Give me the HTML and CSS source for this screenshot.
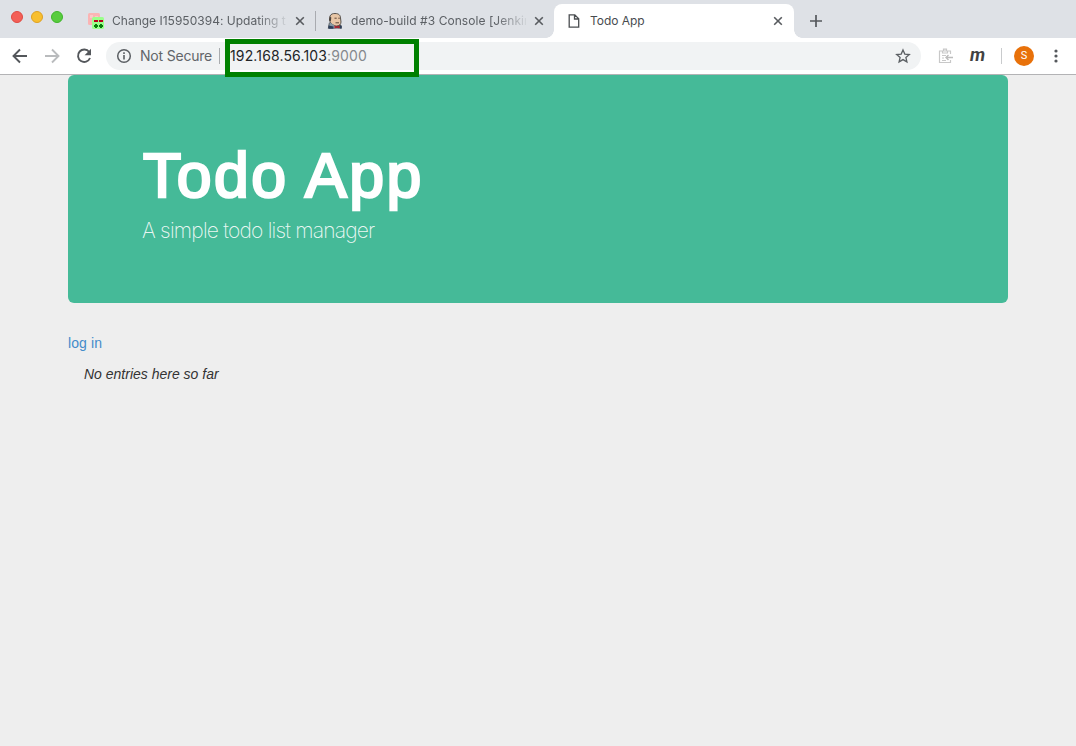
FILE: index.html
```
<!DOCTYPE html>
<html lang="en">
<head>
<meta charset="utf-8">
<title>Todo App</title>
<link rel="stylesheet" href="styles.css">
</head>
<body>
<div class="browser">
  <div class="tabstrip">
    <div class="lights"><i class="light red"></i><i class="light yellow"></i><i class="light green"></i></div>
    <div class="tab first">
      <svg class="favicon" width="16" height="16" viewBox="0 0 16 16"><rect width="12" height="12" rx="1.5" fill="#fbb4b4"/><path d="M2 2h3v3H2zM7 3h3v2H7z" fill="#fcc9c9"/><rect x="4" y="4" width="12" height="12" rx="1.5" fill="#9bff8c"/><path d="M6 8h4M11 8h4" stroke="#b8001c" stroke-width="2"/><path d="M6 13h4M8 11v4M11 13h4M13 11v4" stroke="#087e0b" stroke-width="2"/></svg>
      <span class="label change">Change I15950394: Updating t</span>
      <svg class="close" width="10" height="10" viewBox="0 0 10 10"><path d="M1.2 1.2l7.6 7.6M8.8 1.2L1.2 8.8"/></svg>
    </div>
    <div class="divider"></div>
    <div class="tab second">
      <svg class="favicon" width="16" height="16" viewBox="0 0 16 16"><path d="M2 9.500L.8 15.500h14V13l-3-3z" fill="#4b5055"/><path d="M3 3C4 .9 6 .5 8 .5c4 0 5.500 2 5.500 4.500L14 9c0 2.500-2 4-4.500 4S3 10.500 2.500 7z" fill="#e8c6a6" stroke="#4a4541" stroke-width=".9"/><path d="M2.800 3.500l1.500 1-.5 4-1.800-1.500z" fill="#4b423c"/><path d="M7.500 5.200h2.200M11.300 5.200h1.500M8.500 9.800h3.500" stroke="#5d4637" stroke-width="1"/><path d="M2.500 10l1.500 0 4 3 .5 2.500H2z" fill="#899ba5"/><path d="M7.500 12.500l2.500 1 2.500-1v3l-2.500-1-2.500 1z" fill="#b52130"/><path d="M1.500 12.500l5 1v2.200h-5zM13 13l1.500-.5v3H13z" fill="#2d3f5c"/></svg>
      <span class="label demo">demo-build #3 Console [Jenkin</span>
      <svg class="close" width="10" height="10" viewBox="0 0 10 10"><path d="M1.200 1.200l7.600 7.600M8.800 1.200L1.200 8.800"/></svg>
    </div>
    <div class="tab active">
      <svg class="page-icon" width="12" height="14" viewBox="0 0 12 14"><path d="M1.200.8h5.600l3.900 3.900v8.500H1.200zM6.500.8v4.200h4.200" fill="none" stroke="#4b4e51" stroke-width="1.300"/></svg>
      <span class="label todo">Todo App</span>
      <svg class="close" width="10" height="10" viewBox="0 0 10 10"><path d="M1.200 1.200l7.600 7.600M8.800 1.200L1.200 8.800"/></svg>
    </div>
    <svg class="plus" width="12" height="12" viewBox="0 0 12 12"><path d="M0 6h12M6 0v12" stroke="#55585c" stroke-width="1.700"/></svg>
  </div>
  <div class="toolbar">
    <svg class="nav" width="24" height="24" viewBox="0 0 24 24"><path d="M19 12H6M12 5.500L5.500 12l6.500 6.500" fill="none" stroke="#54575b" stroke-width="1.900"/></svg>
    <svg class="nav" width="24" height="24" viewBox="0 0 24 24"><path d="M5 12h13M12 5.500l6.500 6.500-6.500 6.500" fill="none" stroke="#b9bbbd" stroke-width="1.900"/></svg>
    <svg class="nav" width="24" height="24" viewBox="0 0 24 24"><path d="M17.200 8A6.200 6.200 0 1 0 18 14" fill="none" stroke="#54575b" stroke-width="1.900"/><path d="M19 4.800v6.400h-6.400z" fill="#54575b"/></svg>
    <div class="omnibox">
      <svg width="16" height="16" viewBox="0 0 16 16"><circle cx="8" cy="8" r="6.300" fill="none" stroke="#5b5f63" stroke-width="1.500"/><path d="M8 7v4.500M8 4.300v1.600" stroke="#5b5f63" stroke-width="1.600"/></svg>
      <span class="security">Not Secure</span>
      <span class="bar"></span>
      <span class="url">192.168.56.103<span class="port">:9000</span></span>
      <svg class="star" width="16" height="16" viewBox="0 0 16 16"><path d="M8 1.900l1.800 4.200 4.500.4-3.400 3 1 4.400L8 11.600l-3.900 2.300 1-4.400-3.400-3 4.500-.4z" fill="none" stroke="#5b5f63" stroke-width="1.300"/></svg>
    </div>
    <svg class="clip" width="16" height="16" viewBox="0 0 16 16"><path d="M12.500 6V3h-11v11.500h11V12M4.500 3v2h5V3M5.500 3V1.200h3V3M4 7.500h4M4 10h2M4 12.500h4" fill="none" stroke="#c8c8c8" stroke-width="1.200"/><path d="M15 9.500H8M10.500 7L8 9.500l2.500 2.500" fill="none" stroke="#bcbcbc" stroke-width="1.400"/></svg>
    <span class="m">m</span>
    <span class="sep"></span>
    <span class="avatar">S</span>
    <svg class="dots" width="4" height="14" viewBox="0 0 4 14"><g fill="#55585c"><circle cx="2" cy="2" r="1.600"/><circle cx="2" cy="7" r="1.600"/><circle cx="2" cy="12" r="1.600"/></g></svg>
  </div>
  <div class="highlight"></div>
</div>
<main class="container">
  <header class="jumbotron">
    <h1>Todo App</h1>
    <p>A simple todo list manager</p>
  </header>
  <a class="login">log in</a>
  <p class="empty">No entries here so far</p>
</main>
</body>
</html>
```

FILE: styles.css
```
* { box-sizing: border-box; }
body { margin: 0; height: 746px; overflow: hidden; background: #eee; color: #333; font-family: "Liberation Sans", Arial, sans-serif; }
svg { display: block; flex: none; }
.browser { position: relative; height: 75px; background: #fff; border-bottom: 1px solid #b3b3b5; font-family: Inter, Roboto, sans-serif; }
.tabstrip { height: 38px; display: flex; background: #dee1e6; }
.lights { width: 74px; padding: 11px 0 0 11px; display: flex; gap: 8px; }
.light { width: 12px; height: 12px; border-radius: 50%; border: 1px solid; }
.red { background: #f35f57; border-color: #df4a43; }
.yellow { background: #f8bf2f; border-color: #dea123; }
.green { background: #58cc3e; border-color: #3fb52b; }
.tab { display: flex; align-items: center; height: 34px; margin-top: 4px; }
.first { width: 241px; padding-left: 14px; }
.second { width: 238px; padding-left: 11px; }
.favicon { margin-right: 8px; }
.label { font-family: Inter, sans-serif; font-size: 12px; line-height: 16px; color: #5c6065; white-space: nowrap; }
.change, .demo { width: 175px; -webkit-mask-image: linear-gradient(90deg, #000 145px, transparent 178px); mask-image: linear-gradient(90deg, #000 145px, transparent 178px); }
.change { letter-spacing: .01px; }
.demo { letter-spacing: .05px; }
.todo { color: #484b4f; letter-spacing: -.05px; }
.close { margin-left: 8px; fill: none; stroke: #585b5f; stroke-width: 1.6; }
.divider { width: 1px; height: 20px; margin-top: 11px; background: #a9abb0; }
.active { position: relative; width: 240px; background: #fff; border-radius: 8px 8px 0 0; padding: 0 11px 0 14px; }
.active::before, .active::after { content: ""; position: absolute; bottom: 0; width: 8px; height: 8px; }
.active::before { left: -8px; background: radial-gradient(circle at 0 0, transparent 7.5px, #fff 8px); }
.active::after { right: -8px; background: radial-gradient(circle at 100% 0, transparent 7.5px, #fff 8px); }
.page-icon { margin-right: 10px; }
.active .close { margin-left: auto; }
.plus { margin: 15px 0 0 16px; }
.toolbar { display: flex; align-items: center; height: 36px; padding-left: 8px; }
.nav { margin-right: 8px; }
.omnibox { display: flex; align-items: center; width: 815px; height: 28px; margin-left: 2px; padding: 0 10px; border-radius: 14px; background: #f1f3f4; font-size: 14px; color: #626569; }
.security { width: 73px; margin-left: 8px; letter-spacing: -.2px; white-space: nowrap; }
.security, .url { padding-bottom: 1px; }
.bar { width: 1px; height: 16px; margin: 0 10px 0 6px; background: #a9acaf; }
.url { color: #222427; letter-spacing: .14px; }
.port { color: #85898d; }
.star { margin-left: auto; }
.clip { margin-left: 17px; }
.m { width: 16px; margin-left: 16px; font: italic 700 18px/20px Roboto, sans-serif; color: #424242; margin-top: -3px; }
.sep { width: 1px; height: 16px; margin-left: 15px; background: #c9cbcd; }
.avatar { width: 20px; height: 20px; margin-left: 12px; border-radius: 50%; background: #e8710a; color: #fff; font: 11px/20px Roboto, sans-serif; text-align: center; }
.dots { margin-left: 20px; }
.highlight { position: absolute; left: 225px; top: 39px; width: 194px; height: 38px; border: 5px solid #008000; z-index: 2; }
.container { width: 940px; margin: 0 auto; }
.jumbotron { height: 228px; padding: 64px 74px; border-radius: 6px; background: #45ba98; color: #fff; }
h1 { margin: 0; padding-left: 1px; font-size: 62.5px; line-height: 73px; font-weight: 400; -webkit-text-stroke: 2.6px #fff; letter-spacing: 2.5px; white-space: nowrap; }
.jumbotron p { margin: 6px 0 0; font-family: Inter, sans-serif; font-size: 21px; line-height: 26px; font-weight: 200; letter-spacing: -.8px; color: rgba(255,255,255,.9); }
.login { display: block; margin-top: 30px; font-size: 14px; line-height: 20px; color: #428bca; letter-spacing: .1px; }
.empty { margin: 11px 0 0 16px; font-size: 14px; line-height: 20px; font-style: italic; }
```
